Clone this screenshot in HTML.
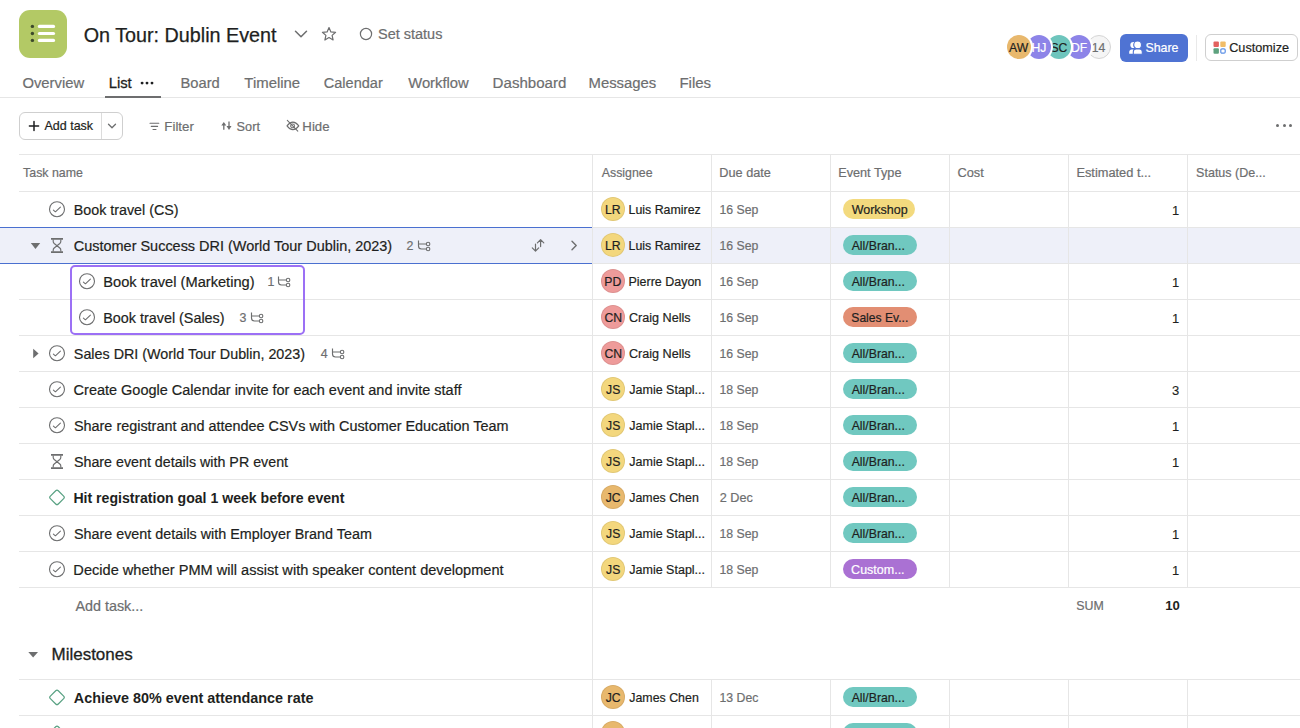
<!DOCTYPE html>
<html><head><meta charset="utf-8"><style>
html,body{margin:0;padding:0;}
body{width:1300px;height:728px;overflow:hidden;position:relative;background:#fff;font-family:"Liberation Sans",sans-serif;}
.a{position:absolute;}
.t{position:absolute;white-space:nowrap;-webkit-text-stroke:0.2px currentColor}
.av{border-radius:50%;text-align:center;font-family:"Liberation Sans",sans-serif;}
.pill{border-radius:10px;font-size:12px;line-height:20px;padding-left:8.5px;box-sizing:border-box;white-space:nowrap;overflow:hidden}
</style></head><body>
<div class="a" style="left:19px;top:10px;width:48px;height:48px;background:#b3c965;border-radius:11px"></div>
<svg class="a" style="left:19px;top:10px" width="48" height="48" viewBox="0 0 48 48"><circle cx="13.4" cy="16.4" r="1.7" fill="#3d4a2b"/><circle cx="13.4" cy="23.5" r="1.7" fill="#3d4a2b"/><circle cx="13.4" cy="30.4" r="1.7" fill="#3d4a2b"/><line x1="20.4" y1="16.4" x2="34.5" y2="16.4" stroke="#fff" stroke-width="3.2" stroke-linecap="round"/><line x1="20.4" y1="23.5" x2="34.5" y2="23.5" stroke="#fff" stroke-width="3.2" stroke-linecap="round"/><line x1="20.4" y1="30.4" x2="34.5" y2="30.4" stroke="#fff" stroke-width="3.2" stroke-linecap="round"/></svg>
<div class="t" style="left:83.67px;top:25px;font-size:19.755px;line-height:20px;color:#1e1f21;font-weight:400;-webkit-text-stroke:0.25px currentColor">On Tour: Dublin Event</div>
<svg class="a" style="left:293px;top:28px" width="16" height="12" viewBox="0 0 16 12"><path d="M2.5 3.2 L8 8.8 L13.5 3.2" fill="none" stroke="#6d6e6f" stroke-width="1.5" stroke-linecap="round" stroke-linejoin="round"/></svg>
<svg class="a" style="left:320px;top:25px" width="18" height="18" viewBox="0 0 18 18"><path d="M9 2.6 L10.9 6.9 L15.6 7.3 L12.1 10.4 L13.1 15 L9 12.6 L4.9 15 L5.9 10.4 L2.4 7.3 L7.1 6.9 Z" fill="none" stroke="#6d6e6f" stroke-width="1.2" stroke-linejoin="round"/></svg>
<svg class="a" style="left:358px;top:26px" width="16" height="16" viewBox="0 0 16 16"><circle cx="8" cy="8" r="5.6" fill="none" stroke="#6d6e6f" stroke-width="1.2"/></svg>
<div class="t" style="left:378.05px;top:24px;font-size:14.484px;line-height:20px;color:#6d6e6f;font-weight:400;">Set status</div>
<div class="a av" style="left:1086.5px;top:35.3px;width:24px;height:24px;background:#f5f5f5;box-shadow:0 0 0 2px #fff;border:1px solid #d5d5d5;box-sizing:border-box"></div>
<div class="t" style="left:1091.79px;top:38px;font-size:12.2px;line-height:20px;color:#6d6e6f;font-weight:400;">14</div>
<div class="a av" style="left:1066.5px;top:35.3px;width:24px;height:24px;background:#8d84e8;box-shadow:0 0 0 2px #fff"></div>
<div class="t" style="left:1070.99px;top:38px;font-size:12.2px;line-height:20px;color:#fff;font-weight:400;">DF</div>
<div class="a av" style="left:1046.5px;top:35.3px;width:24px;height:24px;background:#6ec5bd;box-shadow:0 0 0 2px #fff"></div>
<div class="t" style="left:1050.45px;top:38px;font-size:12.2px;line-height:20px;color:#1e1f21;font-weight:400;">SC</div>
<div class="a av" style="left:1026.5px;top:35.3px;width:24px;height:24px;background:#8d84e8;box-shadow:0 0 0 2px #fff"></div>
<div class="t" style="left:1031.45px;top:38px;font-size:12.2px;line-height:20px;color:#fff;font-weight:400;">HJ</div>
<div class="a av" style="left:1006.5px;top:35.3px;width:24px;height:24px;background:#e8b86d;box-shadow:0 0 0 2px #fff"></div>
<div class="t" style="left:1009.04px;top:38px;font-size:12.2px;line-height:20px;color:#1e1f21;font-weight:400;">AW</div>
<div class="a" style="left:1120px;top:33.5px;width:68px;height:28px;background:#4f73d3;border-radius:6px"></div>
<svg class="a" style="left:1128px;top:39px" width="16" height="16" viewBox="0 0 16 16"><circle cx="5.4" cy="6" r="3.1" fill="#fff"/><path d="M1.2 14.7 V13 C1.2 11.5 2.3 10.5 3.8 10.5 H7 V14.7 Z" fill="#fff"/><circle cx="9.6" cy="5.9" r="3.9" fill="#fff" stroke="#4f73d3" stroke-width="1.1"/><path d="M5.3 15.3 V12.8 C5.3 11.2 6.6 9.9 8.2 9.9 H11.4 C13 9.9 14.3 11.2 14.3 12.8 V15.3 Z" fill="#fff" stroke="#4f73d3" stroke-width="1.1"/></svg>
<div class="t" style="left:1145.41px;top:38px;font-size:12.4px;line-height:20px;color:#fff;font-weight:400;">Share</div>
<div class="a" style="left:1196px;top:34.5px;width:1px;height:26px;background:#e9e9e9"></div>
<div class="a" style="left:1205px;top:34px;width:93px;height:27px;border:1px solid #cfcfcf;border-radius:6px;box-sizing:border-box;background:#fff"></div>
<svg class="a" style="left:1213px;top:40.8px" width="14" height="14" viewBox="0 0 14 14"><rect x="0.5" y="0.5" width="5.4" height="5.4" rx="1" fill="#e2625f"/><rect x="7.3" y="0.5" width="5.4" height="5.4" rx="1" fill="#f1bd68"/><rect x="0.5" y="7.3" width="5.4" height="5.4" rx="1" fill="#5ea27e"/><rect x="7.8" y="7.8" width="4.4" height="4.4" rx="1.2" fill="none" stroke="#5b8fe6" stroke-width="1.2"/></svg>
<div class="t" style="left:1229.21px;top:38px;font-size:12.683px;line-height:20px;color:#1e1f21;font-weight:400;">Customize</div>
<div class="t" style="left:22.40px;top:73px;font-size:14.833px;line-height:20px;color:#6d6e6f;font-weight:400;">Overview</div>
<div class="t" style="left:108.64px;top:73px;font-size:14.85px;line-height:20px;color:#1e1f21;font-weight:400;-webkit-text-stroke:0.3px currentColor">List</div>
<div class="t" style="left:180.55px;top:73px;font-size:14.719px;line-height:20px;color:#6d6e6f;font-weight:400;">Board</div>
<div class="t" style="left:244.37px;top:73px;font-size:14.923px;line-height:20px;color:#6d6e6f;font-weight:400;">Timeline</div>
<div class="t" style="left:323.82px;top:73px;font-size:14.527px;line-height:20px;color:#6d6e6f;font-weight:400;">Calendar</div>
<div class="t" style="left:408.20px;top:73px;font-size:14.81px;line-height:20px;color:#6d6e6f;font-weight:400;">Workflow</div>
<div class="t" style="left:492.62px;top:73px;font-size:15.091px;line-height:20px;color:#6d6e6f;font-weight:400;">Dashboard</div>
<div class="t" style="left:588.54px;top:73px;font-size:14.86px;line-height:20px;color:#6d6e6f;font-weight:400;">Messages</div>
<div class="t" style="left:679.43px;top:73px;font-size:15.035px;line-height:20px;color:#6d6e6f;font-weight:400;">Files</div>
<svg class="a" style="left:138px;top:79px" width="18" height="8" viewBox="0 0 18 8"><circle cx="4.1" cy="4.1" r="1.45" fill="#1e1f21"/><circle cx="9" cy="4.1" r="1.45" fill="#1e1f21"/><circle cx="14" cy="4.1" r="1.45" fill="#1e1f21"/></svg>
<div class="a" style="left:0px;top:96.5px;width:1300px;height:1px;background:#e6e6e6"></div>
<div class="a" style="left:105px;top:96px;width:56px;height:2px;background:#6d6e6f"></div>
<div class="a" style="left:19px;top:112px;width:104px;height:28px;border:1px solid #cfcfcf;border-radius:6px;box-sizing:border-box"></div>
<div class="a" style="left:101px;top:113px;width:1px;height:26px;background:#dcdcdc"></div>
<svg class="a" style="left:27px;top:119px" width="14" height="14" viewBox="0 0 14 14"><path d="M7 2.4 V11.6 M2.4 7 H11.6" stroke="#1e1f21" stroke-width="1.5" stroke-linecap="round"/></svg>
<div class="t" style="left:44.50px;top:116px;font-size:12.491px;line-height:20px;color:#1e1f21;font-weight:400;">Add task</div>
<svg class="a" style="left:106px;top:120px" width="12" height="12" viewBox="0 0 12 12"><path d="M2.5 4.2 L6 7.7 L9.5 4.2" fill="none" stroke="#6d6e6f" stroke-width="1.3" stroke-linecap="round" stroke-linejoin="round"/></svg>
<svg class="a" style="left:149px;top:120px" width="12" height="12" viewBox="0 0 12 12"><path d="M1 3.3 H9.8 M2.3 6.4 H8.6 M4 9.5 H7" stroke="#6d6e6f" stroke-width="1.1" stroke-linecap="round"/></svg>
<div class="t" style="left:164.36px;top:117px;font-size:13.276px;line-height:20px;color:#6d6e6f;font-weight:400;">Filter</div>
<svg class="a" style="left:220px;top:119px" width="13" height="13" viewBox="0 0 13 13"><path d="M3.8 5.5 V10.8 M9 2.5 V8" stroke="#6d6e6f" stroke-width="1.3"/><path d="M1.3 6.6 L3.8 2.9 L6.3 6.6 Z M6.5 7.1 L9 10.9 L11.5 7.1 Z" fill="#6d6e6f"/></svg>
<div class="t" style="left:236.60px;top:117px;font-size:12.734px;line-height:20px;color:#6d6e6f;font-weight:400;">Sort</div>
<svg class="a" style="left:286px;top:119px" width="14" height="14" viewBox="0 0 14 14"><path d="M1 6.9 C2.8 4.4 4.8 3.1 6.9 3.1 C9 3.1 11 4.4 12.8 6.9 C11 9.4 9 10.6 6.9 10.6 C4.8 10.6 2.8 9.4 1 6.9 Z" fill="none" stroke="#6d6e6f" stroke-width="1.05"/><circle cx="6.6" cy="6.9" r="1.9" fill="none" stroke="#6d6e6f" stroke-width="1.05"/><path d="M1.3 1.4 L11.8 12.2" stroke="#6d6e6f" stroke-width="1.05" stroke-linecap="round"/></svg>
<div class="t" style="left:302.37px;top:117px;font-size:13.21px;line-height:20px;color:#6d6e6f;font-weight:400;">Hide</div>
<div class="a" style="left:1276.0px;top:124.4px;width:3px;height:3px;background:#6d6e6f;border-radius:50%"></div>
<div class="a" style="left:1282.5px;top:124.4px;width:3px;height:3px;background:#6d6e6f;border-radius:50%"></div>
<div class="a" style="left:1289.0px;top:124.4px;width:3px;height:3px;background:#6d6e6f;border-radius:50%"></div>
<div class="a" style="left:19px;top:154px;width:1281px;height:1px;background:#e6e6e6"></div>
<div class="t" style="left:23.11px;top:163px;font-size:12.387px;line-height:20px;color:#6d6e6f;font-weight:400;">Task name</div>
<div class="t" style="left:601.80px;top:163px;font-size:12.349px;line-height:20px;color:#6d6e6f;font-weight:400;">Assignee</div>
<div class="t" style="left:719.31px;top:163px;font-size:12.716px;line-height:20px;color:#6d6e6f;font-weight:400;">Due date</div>
<div class="t" style="left:838.21px;top:163px;font-size:12.694px;line-height:20px;color:#6d6e6f;font-weight:400;">Event Type</div>
<div class="t" style="left:957.40px;top:163px;font-size:12.819px;line-height:20px;color:#6d6e6f;font-weight:400;">Cost</div>
<div class="t" style="left:1076.40px;top:163px;font-size:12.829px;line-height:20px;color:#6d6e6f;font-weight:400;">Estimated t...</div>
<div class="t" style="left:1196.11px;top:163px;font-size:12.528px;line-height:20px;color:#6d6e6f;font-weight:400;">Status (De...</div>
<div class="a" style="left:0px;top:227px;width:1300px;height:36px;background:#eef0f9"></div>
<div class="a" style="left:19px;top:191px;width:1281px;height:1px;background:#e6e6e6"></div>
<div class="a" style="left:19px;top:227px;width:1281px;height:1px;background:#e6e6e6"></div>
<div class="a" style="left:19px;top:263px;width:1281px;height:1px;background:#e6e6e6"></div>
<div class="a" style="left:19px;top:299px;width:1281px;height:1px;background:#e6e6e6"></div>
<div class="a" style="left:19px;top:335px;width:1281px;height:1px;background:#e6e6e6"></div>
<div class="a" style="left:19px;top:371px;width:1281px;height:1px;background:#e6e6e6"></div>
<div class="a" style="left:19px;top:407px;width:1281px;height:1px;background:#e6e6e6"></div>
<div class="a" style="left:19px;top:443px;width:1281px;height:1px;background:#e6e6e6"></div>
<div class="a" style="left:19px;top:479px;width:1281px;height:1px;background:#e6e6e6"></div>
<div class="a" style="left:19px;top:515px;width:1281px;height:1px;background:#e6e6e6"></div>
<div class="a" style="left:19px;top:551px;width:1281px;height:1px;background:#e6e6e6"></div>
<div class="a" style="left:19px;top:587px;width:1281px;height:1px;background:#e6e6e6"></div>
<div class="a" style="left:0px;top:227px;width:592px;height:1px;background:#4a70d0"></div>
<div class="a" style="left:0px;top:263px;width:592px;height:1px;background:#4a70d0"></div>
<div class="a" style="left:592px;top:154px;width:1px;height:433px;background:#e6e6e6"></div>
<div class="a" style="left:711px;top:154px;width:1px;height:433px;background:#e6e6e6"></div>
<div class="a" style="left:830px;top:154px;width:1px;height:433px;background:#e6e6e6"></div>
<div class="a" style="left:949px;top:154px;width:1px;height:433px;background:#e6e6e6"></div>
<div class="a" style="left:1068px;top:154px;width:1px;height:433px;background:#e6e6e6"></div>
<div class="a" style="left:1187px;top:154px;width:1px;height:433px;background:#e6e6e6"></div>
<div class="a" style="left:592px;top:587px;width:1px;height:141px;background:#e6e6e6"></div>
<div class="a" style="left:711px;top:679px;width:1px;height:49px;background:#e6e6e6"></div>
<div class="a" style="left:830px;top:679px;width:1px;height:49px;background:#e6e6e6"></div>
<div class="a" style="left:949px;top:679px;width:1px;height:49px;background:#e6e6e6"></div>
<div class="a" style="left:1068px;top:679px;width:1px;height:49px;background:#e6e6e6"></div>
<div class="a" style="left:1187px;top:679px;width:1px;height:49px;background:#e6e6e6"></div>
<div class="a" style="left:19px;top:679px;width:1281px;height:1px;background:#e6e6e6"></div>
<div class="a" style="left:19px;top:715px;width:1281px;height:1px;background:#e6e6e6"></div>
<svg class="a" style="left:48px;top:200px" width="18" height="18" viewBox="0 0 18 18"><circle cx="9" cy="9.2" r="7.5" fill="none" stroke="#6d6e6f" stroke-width="1.1"/><path d="M5.4 10.1 L7.4 11.8 L12.4 7.2" fill="none" stroke="#6d6e6f" stroke-width="1.1" stroke-linecap="round" stroke-linejoin="round"/></svg>
<div class="t" style="left:73.78px;top:200px;font-size:14.295px;line-height:20px;color:#1e1f21;font-weight:400;">Book travel (CS)</div>
<div class="a av" style="left:601px;top:197px;width:24px;height:24px;background:#f3d77d;box-shadow:inset 0 0 0 1px rgba(0,0,0,0.07)"></div>
<div class="t" style="left:604.94px;top:200px;font-size:12.2px;line-height:20px;color:#1e1f21;font-weight:400;">LR</div>
<div class="t" style="left:628.53px;top:200px;font-size:12.382px;line-height:20px;color:#1e1f21;font-weight:400;">Luis Ramirez</div>
<div class="t" style="left:719.53px;top:200px;font-size:12.262px;line-height:20px;color:#6d6e6f;font-weight:400;">16 Sep</div>
<div class="a" style="left:843px;top:199px;width:72.4px;height:20px;border-radius:10px;background:#f3da7e"></div>
<div class="t" style="left:851.70px;top:200px;font-size:12.514px;line-height:20px;color:#1e1f21;font-weight:400;">Workshop</div>
<div class="t" style="left:1171.90px;top:201px;font-size:13px;line-height:20px;color:#1e1f21;font-weight:400;-webkit-text-stroke:0.12px currentColor">1</div>
<svg class="a" style="left:50px;top:237px" width="14" height="16" viewBox="0 0 14 16"><path d="M1 1.85 H13 M1 15.05 H13" stroke="#6d6e6f" stroke-width="1.7"/><path d="M3.2 2.5 V4.6 Q3.2 5.6 4.2 6.5 L7 8.8 L9.8 11 Q10.8 11.9 10.8 12.9 V14.6 M10.8 2.5 V4.6 Q10.8 5.6 9.8 6.5 L7 8.8 L4.2 11 Q3.2 11.9 3.2 12.9 V14.6" fill="none" stroke="#6d6e6f" stroke-width="1.15"/></svg>
<div class="t" style="left:73.82px;top:236px;font-size:14.467px;line-height:20px;color:#1e1f21;font-weight:400;">Customer Success DRI (World Tour Dublin, 2023)</div>
<div class="t" style="left:406.52px;top:236px;font-size:12.4px;line-height:20px;color:#6d6e6f;font-weight:400;">2</div>
<svg class="a" style="left:417.0px;top:238px" width="14" height="14" viewBox="0 0 14 14"><path d="M1.5 2.5 V8 C1.5 10 2.5 11 4.5 11 H9.2 M1.5 6 H9.2" fill="none" stroke="#6d6e6f" stroke-width="1.15"/><circle cx="11.1" cy="6" r="1.75" fill="none" stroke="#6d6e6f" stroke-width="1.1"/><circle cx="11.1" cy="11" r="1.75" fill="none" stroke="#6d6e6f" stroke-width="1.1"/></svg>
<div class="a av" style="left:601px;top:233px;width:24px;height:24px;background:#f3d77d;box-shadow:inset 0 0 0 1px rgba(0,0,0,0.07)"></div>
<div class="t" style="left:604.94px;top:236px;font-size:12.2px;line-height:20px;color:#1e1f21;font-weight:400;">LR</div>
<div class="t" style="left:628.53px;top:236px;font-size:12.382px;line-height:20px;color:#1e1f21;font-weight:400;">Luis Ramirez</div>
<div class="t" style="left:719.53px;top:236px;font-size:12.262px;line-height:20px;color:#6d6e6f;font-weight:400;">16 Sep</div>
<div class="a" style="left:843px;top:235px;width:74px;height:20px;border-radius:10px;background:#70c8c0"></div>
<div class="t" style="left:851.70px;top:236px;font-size:12.263px;line-height:20px;color:#1e1f21;font-weight:400;">All/Bran...</div>
<svg class="a" style="left:78px;top:272px" width="18" height="18" viewBox="0 0 18 18"><circle cx="9" cy="9.2" r="7.5" fill="none" stroke="#6d6e6f" stroke-width="1.1"/><path d="M5.4 10.1 L7.4 11.8 L12.4 7.2" fill="none" stroke="#6d6e6f" stroke-width="1.1" stroke-linecap="round" stroke-linejoin="round"/></svg>
<div class="t" style="left:103.25px;top:272px;font-size:14.657px;line-height:20px;color:#1e1f21;font-weight:400;">Book travel (Marketing)</div>
<div class="t" style="left:267.43px;top:272px;font-size:12.4px;line-height:20px;color:#6d6e6f;font-weight:400;">1</div>
<svg class="a" style="left:277.4px;top:274px" width="14" height="14" viewBox="0 0 14 14"><path d="M1.5 2.5 V8 C1.5 10 2.5 11 4.5 11 H9.2 M1.5 6 H9.2" fill="none" stroke="#6d6e6f" stroke-width="1.15"/><circle cx="11.1" cy="6" r="1.75" fill="none" stroke="#6d6e6f" stroke-width="1.1"/><circle cx="11.1" cy="11" r="1.75" fill="none" stroke="#6d6e6f" stroke-width="1.1"/></svg>
<div class="a av" style="left:601px;top:269px;width:24px;height:24px;background:#ee9b9a;box-shadow:inset 0 0 0 1px rgba(0,0,0,0.07)"></div>
<div class="t" style="left:604.26px;top:272px;font-size:12.2px;line-height:20px;color:#1e1f21;font-weight:400;">PD</div>
<div class="t" style="left:628.53px;top:272px;font-size:12.47px;line-height:20px;color:#1e1f21;font-weight:400;">Pierre Dayon</div>
<div class="t" style="left:719.53px;top:272px;font-size:12.262px;line-height:20px;color:#6d6e6f;font-weight:400;">16 Sep</div>
<div class="a" style="left:843px;top:271px;width:74px;height:20px;border-radius:10px;background:#70c8c0"></div>
<div class="t" style="left:851.70px;top:272px;font-size:12.263px;line-height:20px;color:#1e1f21;font-weight:400;">All/Bran...</div>
<div class="t" style="left:1171.90px;top:273px;font-size:13px;line-height:20px;color:#1e1f21;font-weight:400;-webkit-text-stroke:0.12px currentColor">1</div>
<svg class="a" style="left:78px;top:308px" width="18" height="18" viewBox="0 0 18 18"><circle cx="9" cy="9.2" r="7.5" fill="none" stroke="#6d6e6f" stroke-width="1.1"/><path d="M5.4 10.1 L7.4 11.8 L12.4 7.2" fill="none" stroke="#6d6e6f" stroke-width="1.1" stroke-linecap="round" stroke-linejoin="round"/></svg>
<div class="t" style="left:103.28px;top:308px;font-size:14.379px;line-height:20px;color:#1e1f21;font-weight:400;">Book travel (Sales)</div>
<div class="t" style="left:239.61px;top:308px;font-size:12.4px;line-height:20px;color:#6d6e6f;font-weight:400;">3</div>
<svg class="a" style="left:250.0px;top:310px" width="14" height="14" viewBox="0 0 14 14"><path d="M1.5 2.5 V8 C1.5 10 2.5 11 4.5 11 H9.2 M1.5 6 H9.2" fill="none" stroke="#6d6e6f" stroke-width="1.15"/><circle cx="11.1" cy="6" r="1.75" fill="none" stroke="#6d6e6f" stroke-width="1.1"/><circle cx="11.1" cy="11" r="1.75" fill="none" stroke="#6d6e6f" stroke-width="1.1"/></svg>
<div class="a av" style="left:601px;top:305px;width:24px;height:24px;background:#ee9b9a;box-shadow:inset 0 0 0 1px rgba(0,0,0,0.07)"></div>
<div class="t" style="left:604.40px;top:308px;font-size:12.2px;line-height:20px;color:#1e1f21;font-weight:400;">CN</div>
<div class="t" style="left:628.91px;top:308px;font-size:12.614px;line-height:20px;color:#1e1f21;font-weight:400;">Craig Nells</div>
<div class="t" style="left:719.53px;top:308px;font-size:12.262px;line-height:20px;color:#6d6e6f;font-weight:400;">16 Sep</div>
<div class="a" style="left:843px;top:307px;width:74px;height:20px;border-radius:10px;background:#e28e73"></div>
<div class="t" style="left:851.32px;top:308px;font-size:12.129px;line-height:20px;color:#1e1f21;font-weight:400;">Sales Ev...</div>
<div class="t" style="left:1171.90px;top:309px;font-size:13px;line-height:20px;color:#1e1f21;font-weight:400;-webkit-text-stroke:0.12px currentColor">1</div>
<svg class="a" style="left:48px;top:344px" width="18" height="18" viewBox="0 0 18 18"><circle cx="9" cy="9.2" r="7.5" fill="none" stroke="#6d6e6f" stroke-width="1.1"/><path d="M5.4 10.1 L7.4 11.8 L12.4 7.2" fill="none" stroke="#6d6e6f" stroke-width="1.1" stroke-linecap="round" stroke-linejoin="round"/></svg>
<div class="t" style="left:73.85px;top:344px;font-size:14.342px;line-height:20px;color:#1e1f21;font-weight:400;">Sales DRI (World Tour Dublin, 2023)</div>
<div class="t" style="left:320.71px;top:344px;font-size:12.4px;line-height:20px;color:#6d6e6f;font-weight:400;">4</div>
<svg class="a" style="left:331.0px;top:346px" width="14" height="14" viewBox="0 0 14 14"><path d="M1.5 2.5 V8 C1.5 10 2.5 11 4.5 11 H9.2 M1.5 6 H9.2" fill="none" stroke="#6d6e6f" stroke-width="1.15"/><circle cx="11.1" cy="6" r="1.75" fill="none" stroke="#6d6e6f" stroke-width="1.1"/><circle cx="11.1" cy="11" r="1.75" fill="none" stroke="#6d6e6f" stroke-width="1.1"/></svg>
<div class="a av" style="left:601px;top:341px;width:24px;height:24px;background:#ee9b9a;box-shadow:inset 0 0 0 1px rgba(0,0,0,0.07)"></div>
<div class="t" style="left:604.40px;top:344px;font-size:12.2px;line-height:20px;color:#1e1f21;font-weight:400;">CN</div>
<div class="t" style="left:628.91px;top:344px;font-size:12.614px;line-height:20px;color:#1e1f21;font-weight:400;">Craig Nells</div>
<div class="t" style="left:719.53px;top:344px;font-size:12.262px;line-height:20px;color:#6d6e6f;font-weight:400;">16 Sep</div>
<div class="a" style="left:843px;top:343px;width:74px;height:20px;border-radius:10px;background:#70c8c0"></div>
<div class="t" style="left:851.70px;top:344px;font-size:12.263px;line-height:20px;color:#1e1f21;font-weight:400;">All/Bran...</div>
<svg class="a" style="left:48px;top:380px" width="18" height="18" viewBox="0 0 18 18"><circle cx="9" cy="9.2" r="7.5" fill="none" stroke="#6d6e6f" stroke-width="1.1"/><path d="M5.4 10.1 L7.4 11.8 L12.4 7.2" fill="none" stroke="#6d6e6f" stroke-width="1.1" stroke-linecap="round" stroke-linejoin="round"/></svg>
<div class="t" style="left:73.62px;top:380px;font-size:14.496px;line-height:20px;color:#1e1f21;font-weight:400;">Create Google Calendar invite for each event and invite staff</div>
<div class="a av" style="left:601px;top:377px;width:24px;height:24px;background:#f3d77d;box-shadow:inset 0 0 0 1px rgba(0,0,0,0.07)"></div>
<div class="t" style="left:606.04px;top:380px;font-size:12.2px;line-height:20px;color:#1e1f21;font-weight:400;">JS</div>
<div class="t" style="left:629.30px;top:380px;font-size:12.516px;line-height:20px;color:#1e1f21;font-weight:400;">Jamie Stapl...</div>
<div class="t" style="left:719.53px;top:380px;font-size:12.295px;line-height:20px;color:#6d6e6f;font-weight:400;">18 Sep</div>
<div class="a" style="left:843px;top:379px;width:74px;height:20px;border-radius:10px;background:#70c8c0"></div>
<div class="t" style="left:851.70px;top:380px;font-size:12.263px;line-height:20px;color:#1e1f21;font-weight:400;">All/Bran...</div>
<div class="t" style="left:1171.90px;top:381px;font-size:13px;line-height:20px;color:#1e1f21;font-weight:400;-webkit-text-stroke:0.12px currentColor">3</div>
<svg class="a" style="left:48px;top:416px" width="18" height="18" viewBox="0 0 18 18"><circle cx="9" cy="9.2" r="7.5" fill="none" stroke="#6d6e6f" stroke-width="1.1"/><path d="M5.4 10.1 L7.4 11.8 L12.4 7.2" fill="none" stroke="#6d6e6f" stroke-width="1.1" stroke-linecap="round" stroke-linejoin="round"/></svg>
<div class="t" style="left:73.95px;top:416px;font-size:14.419px;line-height:20px;color:#1e1f21;font-weight:400;">Share registrant and attendee CSVs with Customer Education Team</div>
<div class="a av" style="left:601px;top:413px;width:24px;height:24px;background:#f3d77d;box-shadow:inset 0 0 0 1px rgba(0,0,0,0.07)"></div>
<div class="t" style="left:606.04px;top:416px;font-size:12.2px;line-height:20px;color:#1e1f21;font-weight:400;">JS</div>
<div class="t" style="left:629.30px;top:416px;font-size:12.516px;line-height:20px;color:#1e1f21;font-weight:400;">Jamie Stapl...</div>
<div class="t" style="left:719.53px;top:416px;font-size:12.295px;line-height:20px;color:#6d6e6f;font-weight:400;">18 Sep</div>
<div class="a" style="left:843px;top:415px;width:74px;height:20px;border-radius:10px;background:#70c8c0"></div>
<div class="t" style="left:851.70px;top:416px;font-size:12.263px;line-height:20px;color:#1e1f21;font-weight:400;">All/Bran...</div>
<div class="t" style="left:1171.90px;top:417px;font-size:13px;line-height:20px;color:#1e1f21;font-weight:400;-webkit-text-stroke:0.12px currentColor">1</div>
<svg class="a" style="left:50px;top:453px" width="14" height="16" viewBox="0 0 14 16"><path d="M1 1.85 H13 M1 15.05 H13" stroke="#6d6e6f" stroke-width="1.7"/><path d="M3.2 2.5 V4.6 Q3.2 5.6 4.2 6.5 L7 8.8 L9.8 11 Q10.8 11.9 10.8 12.9 V14.6 M10.8 2.5 V4.6 Q10.8 5.6 9.8 6.5 L7 8.8 L4.2 11 Q3.2 11.9 3.2 12.9 V14.6" fill="none" stroke="#6d6e6f" stroke-width="1.15"/></svg>
<div class="t" style="left:73.95px;top:452px;font-size:14.279px;line-height:20px;color:#1e1f21;font-weight:400;">Share event details with PR event</div>
<div class="a av" style="left:601px;top:449px;width:24px;height:24px;background:#f3d77d;box-shadow:inset 0 0 0 1px rgba(0,0,0,0.07)"></div>
<div class="t" style="left:606.04px;top:452px;font-size:12.2px;line-height:20px;color:#1e1f21;font-weight:400;">JS</div>
<div class="t" style="left:629.30px;top:452px;font-size:12.516px;line-height:20px;color:#1e1f21;font-weight:400;">Jamie Stapl...</div>
<div class="t" style="left:719.53px;top:452px;font-size:12.295px;line-height:20px;color:#6d6e6f;font-weight:400;">18 Sep</div>
<div class="a" style="left:843px;top:451px;width:74px;height:20px;border-radius:10px;background:#70c8c0"></div>
<div class="t" style="left:851.70px;top:452px;font-size:12.263px;line-height:20px;color:#1e1f21;font-weight:400;">All/Bran...</div>
<div class="t" style="left:1171.90px;top:453px;font-size:13px;line-height:20px;color:#1e1f21;font-weight:400;-webkit-text-stroke:0.12px currentColor">1</div>
<svg class="a" style="left:48px;top:488px" width="18" height="18" viewBox="0 0 18 18"><rect x="3.4" y="3.8" width="11.2" height="11.2" rx="1.8" transform="rotate(45 9 9.4)" fill="none" stroke="#58a182" stroke-width="1.2"/></svg>
<div class="t" style="left:73.42px;top:488px;font-size:14.107px;line-height:20px;color:#1e1f21;font-weight:700;-webkit-text-stroke:0">Hit registration goal 1 week before event</div>
<div class="a av" style="left:601px;top:485px;width:24px;height:24px;background:#e8b86d;box-shadow:inset 0 0 0 1px rgba(0,0,0,0.07)"></div>
<div class="t" style="left:605.66px;top:488px;font-size:12.2px;line-height:20px;color:#1e1f21;font-weight:400;">JC</div>
<div class="t" style="left:629.31px;top:488px;font-size:12.396px;line-height:20px;color:#1e1f21;font-weight:400;">James Chen</div>
<div class="t" style="left:719.71px;top:488px;font-size:12.668px;line-height:20px;color:#6d6e6f;font-weight:400;">2 Dec</div>
<div class="a" style="left:843px;top:487px;width:74px;height:20px;border-radius:10px;background:#70c8c0"></div>
<div class="t" style="left:851.70px;top:488px;font-size:12.263px;line-height:20px;color:#1e1f21;font-weight:400;">All/Bran...</div>
<svg class="a" style="left:48px;top:524px" width="18" height="18" viewBox="0 0 18 18"><circle cx="9" cy="9.2" r="7.5" fill="none" stroke="#6d6e6f" stroke-width="1.1"/><path d="M5.4 10.1 L7.4 11.8 L12.4 7.2" fill="none" stroke="#6d6e6f" stroke-width="1.1" stroke-linecap="round" stroke-linejoin="round"/></svg>
<div class="t" style="left:73.95px;top:524px;font-size:14.354px;line-height:20px;color:#1e1f21;font-weight:400;">Share event details with Employer Brand Team</div>
<div class="a av" style="left:601px;top:521px;width:24px;height:24px;background:#f3d77d;box-shadow:inset 0 0 0 1px rgba(0,0,0,0.07)"></div>
<div class="t" style="left:606.04px;top:524px;font-size:12.2px;line-height:20px;color:#1e1f21;font-weight:400;">JS</div>
<div class="t" style="left:629.30px;top:524px;font-size:12.516px;line-height:20px;color:#1e1f21;font-weight:400;">Jamie Stapl...</div>
<div class="t" style="left:719.53px;top:524px;font-size:12.295px;line-height:20px;color:#6d6e6f;font-weight:400;">18 Sep</div>
<div class="a" style="left:843px;top:523px;width:74px;height:20px;border-radius:10px;background:#70c8c0"></div>
<div class="t" style="left:851.70px;top:524px;font-size:12.263px;line-height:20px;color:#1e1f21;font-weight:400;">All/Bran...</div>
<div class="t" style="left:1171.90px;top:525px;font-size:13px;line-height:20px;color:#1e1f21;font-weight:400;-webkit-text-stroke:0.12px currentColor">1</div>
<svg class="a" style="left:48px;top:560px" width="18" height="18" viewBox="0 0 18 18"><circle cx="9" cy="9.2" r="7.5" fill="none" stroke="#6d6e6f" stroke-width="1.1"/><path d="M5.4 10.1 L7.4 11.8 L12.4 7.2" fill="none" stroke="#6d6e6f" stroke-width="1.1" stroke-linecap="round" stroke-linejoin="round"/></svg>
<div class="t" style="left:73.36px;top:560px;font-size:14.59px;line-height:20px;color:#1e1f21;font-weight:400;">Decide whether PMM will assist with speaker content development</div>
<div class="a av" style="left:601px;top:557px;width:24px;height:24px;background:#f3d77d;box-shadow:inset 0 0 0 1px rgba(0,0,0,0.07)"></div>
<div class="t" style="left:606.04px;top:560px;font-size:12.2px;line-height:20px;color:#1e1f21;font-weight:400;">JS</div>
<div class="t" style="left:629.30px;top:560px;font-size:12.516px;line-height:20px;color:#1e1f21;font-weight:400;">Jamie Stapl...</div>
<div class="t" style="left:719.53px;top:560px;font-size:12.295px;line-height:20px;color:#6d6e6f;font-weight:400;">18 Sep</div>
<div class="a" style="left:843px;top:559px;width:74px;height:20px;border-radius:10px;background:#aa71d3"></div>
<div class="t" style="left:851.11px;top:560px;font-size:12.507px;line-height:20px;color:#fff;font-weight:400;">Custom...</div>
<div class="t" style="left:1171.90px;top:561px;font-size:13px;line-height:20px;color:#1e1f21;font-weight:400;-webkit-text-stroke:0.12px currentColor">1</div>
<svg class="a" style="left:48px;top:688px" width="18" height="18" viewBox="0 0 18 18"><rect x="3.4" y="3.8" width="11.2" height="11.2" rx="1.8" transform="rotate(45 9 9.4)" fill="none" stroke="#58a182" stroke-width="1.2"/></svg>
<div class="t" style="left:73.78px;top:688px;font-size:14.392px;line-height:20px;color:#1e1f21;font-weight:700;-webkit-text-stroke:0">Achieve 80% event attendance rate</div>
<div class="a av" style="left:601px;top:685px;width:24px;height:24px;background:#e8b86d;box-shadow:inset 0 0 0 1px rgba(0,0,0,0.07)"></div>
<div class="t" style="left:605.66px;top:688px;font-size:12.2px;line-height:20px;color:#1e1f21;font-weight:400;">JC</div>
<div class="t" style="left:629.31px;top:688px;font-size:12.396px;line-height:20px;color:#1e1f21;font-weight:400;">James Chen</div>
<div class="t" style="left:719.53px;top:688px;font-size:12.264px;line-height:20px;color:#6d6e6f;font-weight:400;">13 Dec</div>
<div class="a" style="left:843px;top:687px;width:74px;height:20px;border-radius:10px;background:#70c8c0"></div>
<div class="t" style="left:851.70px;top:688px;font-size:12.263px;line-height:20px;color:#1e1f21;font-weight:400;">All/Bran...</div>
<svg class="a" style="left:48px;top:724px" width="18" height="18" viewBox="0 0 18 18"><rect x="3.4" y="3.8" width="11.2" height="11.2" rx="1.8" transform="rotate(45 9 9.4)" fill="none" stroke="#58a182" stroke-width="1.2"/></svg>
<div class="a av" style="left:601px;top:721px;width:24px;height:24px;background:#e8b86d;box-shadow:inset 0 0 0 1px rgba(0,0,0,0.07)"></div>
<div class="a" style="left:843px;top:723px;width:74px;height:20px;border-radius:10px;background:#70c8c0"></div>
<svg class="a" style="left:29px;top:241px" width="13" height="10" viewBox="0 0 13 10"><path d="M1.8 2 H11.2 L6.5 8 Z" fill="#6d6e6f"/></svg>
<svg class="a" style="left:31px;top:347px" width="10" height="13" viewBox="0 0 10 13"><path d="M2.2 1.8 V11.2 L7.6 6.5 Z" fill="#6d6e6f"/></svg>
<svg class="a" style="left:27px;top:650px" width="13" height="10" viewBox="0 0 13 10"><path d="M1.3 2 H11 L6.15 7.6 Z" fill="#6d6e6f"/></svg>
<svg class="a" style="left:530px;top:238px" width="16" height="16" viewBox="0 0 16 16"><path d="M5.5 6 V13 M2.3 9.9 L5.5 13.1 L8.7 9.9 M10.6 1.8 V8.6 M7.4 4.9 L10.6 1.7 L13.8 4.9" fill="none" stroke="#6d6e6f" stroke-width="1.2" stroke-linecap="round" stroke-linejoin="round"/></svg>
<svg class="a" style="left:568px;top:238px" width="12" height="15" viewBox="0 0 12 15"><path d="M4 3.3 L8.2 7.5 L4 11.7" fill="none" stroke="#6d6e6f" stroke-width="1.4" stroke-linecap="round" stroke-linejoin="round"/></svg>
<div class="a" style="left:70px;top:265px;width:234.5px;height:69.8px;border:2px solid #9c70f5;border-radius:5px;box-sizing:border-box"></div>
<div class="t" style="left:75.40px;top:596px;font-size:14.371px;line-height:20px;color:#6d6e6f;font-weight:400;">Add task...</div>
<div class="t" style="left:1076.31px;top:596px;font-size:12.385px;line-height:20px;color:#6d6e6f;font-weight:400;">SUM</div>
<div class="t" style="left:1165.18px;top:596px;font-size:13.178px;line-height:20px;color:#1e1f21;font-weight:700;-webkit-text-stroke:0">10</div>
<div class="t" style="left:51.47px;top:645px;font-size:17.001px;line-height:20px;color:#1e1f21;font-weight:400;-webkit-text-stroke:0.3px currentColor">Milestones</div>
</body></html>
